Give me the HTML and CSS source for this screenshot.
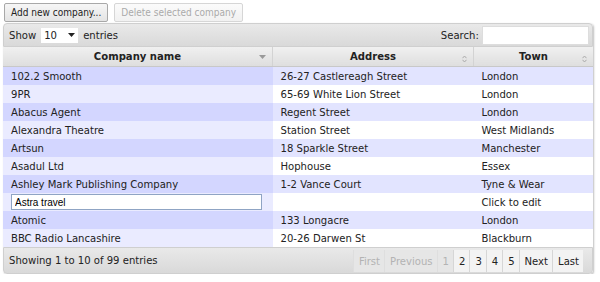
FILE: index.html
```html
<!DOCTYPE html>
<html lang="en">
<head>
    <meta charset="UTF-8">
    <title>Companies</title>
    <link rel="stylesheet" href="styles.css">
</head>
<body>
    <div class="actions">
        <button class="btn">Add new company...</button>
        <button class="btn" disabled>Delete selected company</button>
    </div>

    <div class="grid">
        <div class="toolbar top">
            <label class="length">Show
                <span class="select">10 <svg width="7" height="4" viewBox="0 0 7 4"><path d="M0 0h7L3.5 4z" fill="#222"/></svg></span>
                entries</label>
            <label class="search">Search: <input type="text"></label>
        </div>

        <table>
            <thead>
                <tr>
                    <th class="col-name">Company name
                        <svg class="sort" width="7" height="4" viewBox="0 0 7 4"><path d="M0 0h7L3.5 4z" fill="#999"/></svg></th>
                    <th class="col-address">Address
                        <svg class="sort" width="5" height="8" viewBox="0 0 5 8"><path d="M0.5 3.2L2.5 1 4.5 3.2M0.5 4.8L2.5 7 4.5 4.8" fill="none" stroke="#aaa"/></svg></th>
                    <th class="col-town">Town
                        <svg class="sort" width="5" height="8" viewBox="0 0 5 8"><path d="M0.5 3.2L2.5 1 4.5 3.2M0.5 4.8L2.5 7 4.5 4.8" fill="none" stroke="#aaa"/></svg></th>
                </tr>
            </thead>
            <tbody>
                <tr class="odd"><td class="sorted">102.2 Smooth</td><td>26-27 Castlereagh Street</td><td>London</td></tr>
                <tr class="even"><td class="sorted">9PR</td><td>65-69 White Lion Street</td><td>London</td></tr>
                <tr class="odd"><td class="sorted">Abacus Agent</td><td>Regent Street</td><td>London</td></tr>
                <tr class="even"><td class="sorted">Alexandra Theatre</td><td>Station Street</td><td>West Midlands</td></tr>
                <tr class="odd"><td class="sorted">Artsun</td><td>18 Sparkle Street</td><td>Manchester</td></tr>
                <tr class="even"><td class="sorted">Asadul Ltd</td><td>Hophouse</td><td>Essex</td></tr>
                <tr class="odd"><td class="sorted">Ashley Mark Publishing Company</td><td>1-2 Vance Court</td><td>Tyne &amp; Wear</td></tr>
                <tr class="editing"><td class="sorted"><input class="edit-input" type="text" value="Astra travel"></td><td></td><td>Click to edit</td></tr>
                <tr class="odd"><td class="sorted">Atomic</td><td>133 Longacre</td><td>London</td></tr>
                <tr class="even"><td class="sorted">BBC Radio Lancashire</td><td>20-26 Darwen St</td><td>Blackburn</td></tr>
            </tbody>
        </table>

        <div class="toolbar bottom">
            <div class="info">Showing 1 to 10 of 99 entries</div>
            <div class="paging">
                <span class="page disabled">First</span><span class="page disabled">Previous</span><span class="page disabled">1</span><span class="page">2</span><span class="page">3</span><span class="page">4</span><span class="page">5</span><span class="page">Next</span><span class="page">Last</span>
            </div>
        </div>
    </div>
</body>
</html>
```

FILE: styles.css
```css
body {
    margin: 0;
    padding: 3px 0 0 3px;
    font-family: "DejaVu Sans Condensed", "DejaVu Sans", sans-serif;
    font-stretch: condensed;
    font-size: 11.2px;
    color: #222;
    background: #fff;
}

.actions {
    display: flex;
    gap: 6px;
    margin-left: 1px;
}

.btn {
    height: 19px;
    padding: 0 6px;
    font-family: inherit;
    font-stretch: condensed;
    font-size: 10px;
    color: #222;
    background: linear-gradient(#f6f6f6, #e4e4e4);
    border: 1px solid #a8a8a8;
    border-radius: 2px;
}

.btn:disabled {
    color: #aaa;
    border-color: #d6d6d6;
    background: linear-gradient(#fbfbfb, #f1f1f1);
}

.grid {
    width: 590px;
    margin-top: 1px;
    box-shadow: 1px 1px 2px rgba(0, 0, 0, 0.25);
    border-radius: 4px;
}

.toolbar {
    display: flex;
    align-items: center;
    justify-content: space-between;
    background: linear-gradient(#e9e9e9, #d9d9d9);
    border: 1px solid #cfcfcf;
    padding: 0 3px 0 5px;
}

.toolbar.top {
    height: 22px;
    border-radius: 4px 4px 0 0;
}

.toolbar.bottom {
    height: 25px;
    border-radius: 0 0 4px 4px;
}

.length {
    display: flex;
    align-items: center;
    gap: 5px;
}

.select {
    display: inline-flex;
    align-items: center;
    justify-content: space-between;
    width: 31px;
    height: 15px;
    padding: 0 3px;
    background: #fff;
}

.search input {
    width: 101px;
    height: 15px;
    margin: 0;
    border: 1px solid #ddd;
    background: #fff;
    vertical-align: middle;
}

table {
    width: 590px;
    border-collapse: collapse;
    table-layout: fixed;
}

th {
    position: relative;
    height: 19px;
    padding: 0;
    font-weight: bold;
    text-align: center;
    background: linear-gradient(#f0f0f0, #dedede);
    border-left: 1px solid #d3d3d3;
    border-bottom: 1px solid #c8c8c8;
}

th:first-child {
    border-left: none;
}

th .sort {
    position: absolute;
    right: 6px;
    top: 8px;
}

.col-name { width: 269px; }
.col-address { width: 200px; }

td {
    height: 18px;
    padding: 0 8px;
    white-space: nowrap;
    overflow: hidden;
}

tr.odd td { background: #e2e4ff; }
tr.odd td.sorted { background: #d3d6ff; }
tr.even td, tr.editing td { background: #fff; }
tr.even td.sorted, tr.editing td.sorted { background: #eaebff; }

.edit-input {
    display: block;
    box-sizing: border-box;
    width: 251px;
    height: 16px;
    margin: 0;
    padding: 0 3px;
    font-family: "Liberation Sans", Arial, sans-serif;
    font-size: 10px;
    color: #000;
    background: #fff;
    border: 1px solid #8fa4c4;
}

.paging {
    display: flex;
    align-self: stretch;
    padding: 2px 0 1px;
    margin-right: 6px;
}

.page {
    display: flex;
    align-items: center;
    padding: 0 4px 0 5px;
    color: #222;
    background: #f3f3f3;
    border-left: 1px solid #d6d6d6;
}

.page.disabled {
    color: #b3b3b3;
    background: #e6e6e6;
    border-left-color: #dedede;
}
```
